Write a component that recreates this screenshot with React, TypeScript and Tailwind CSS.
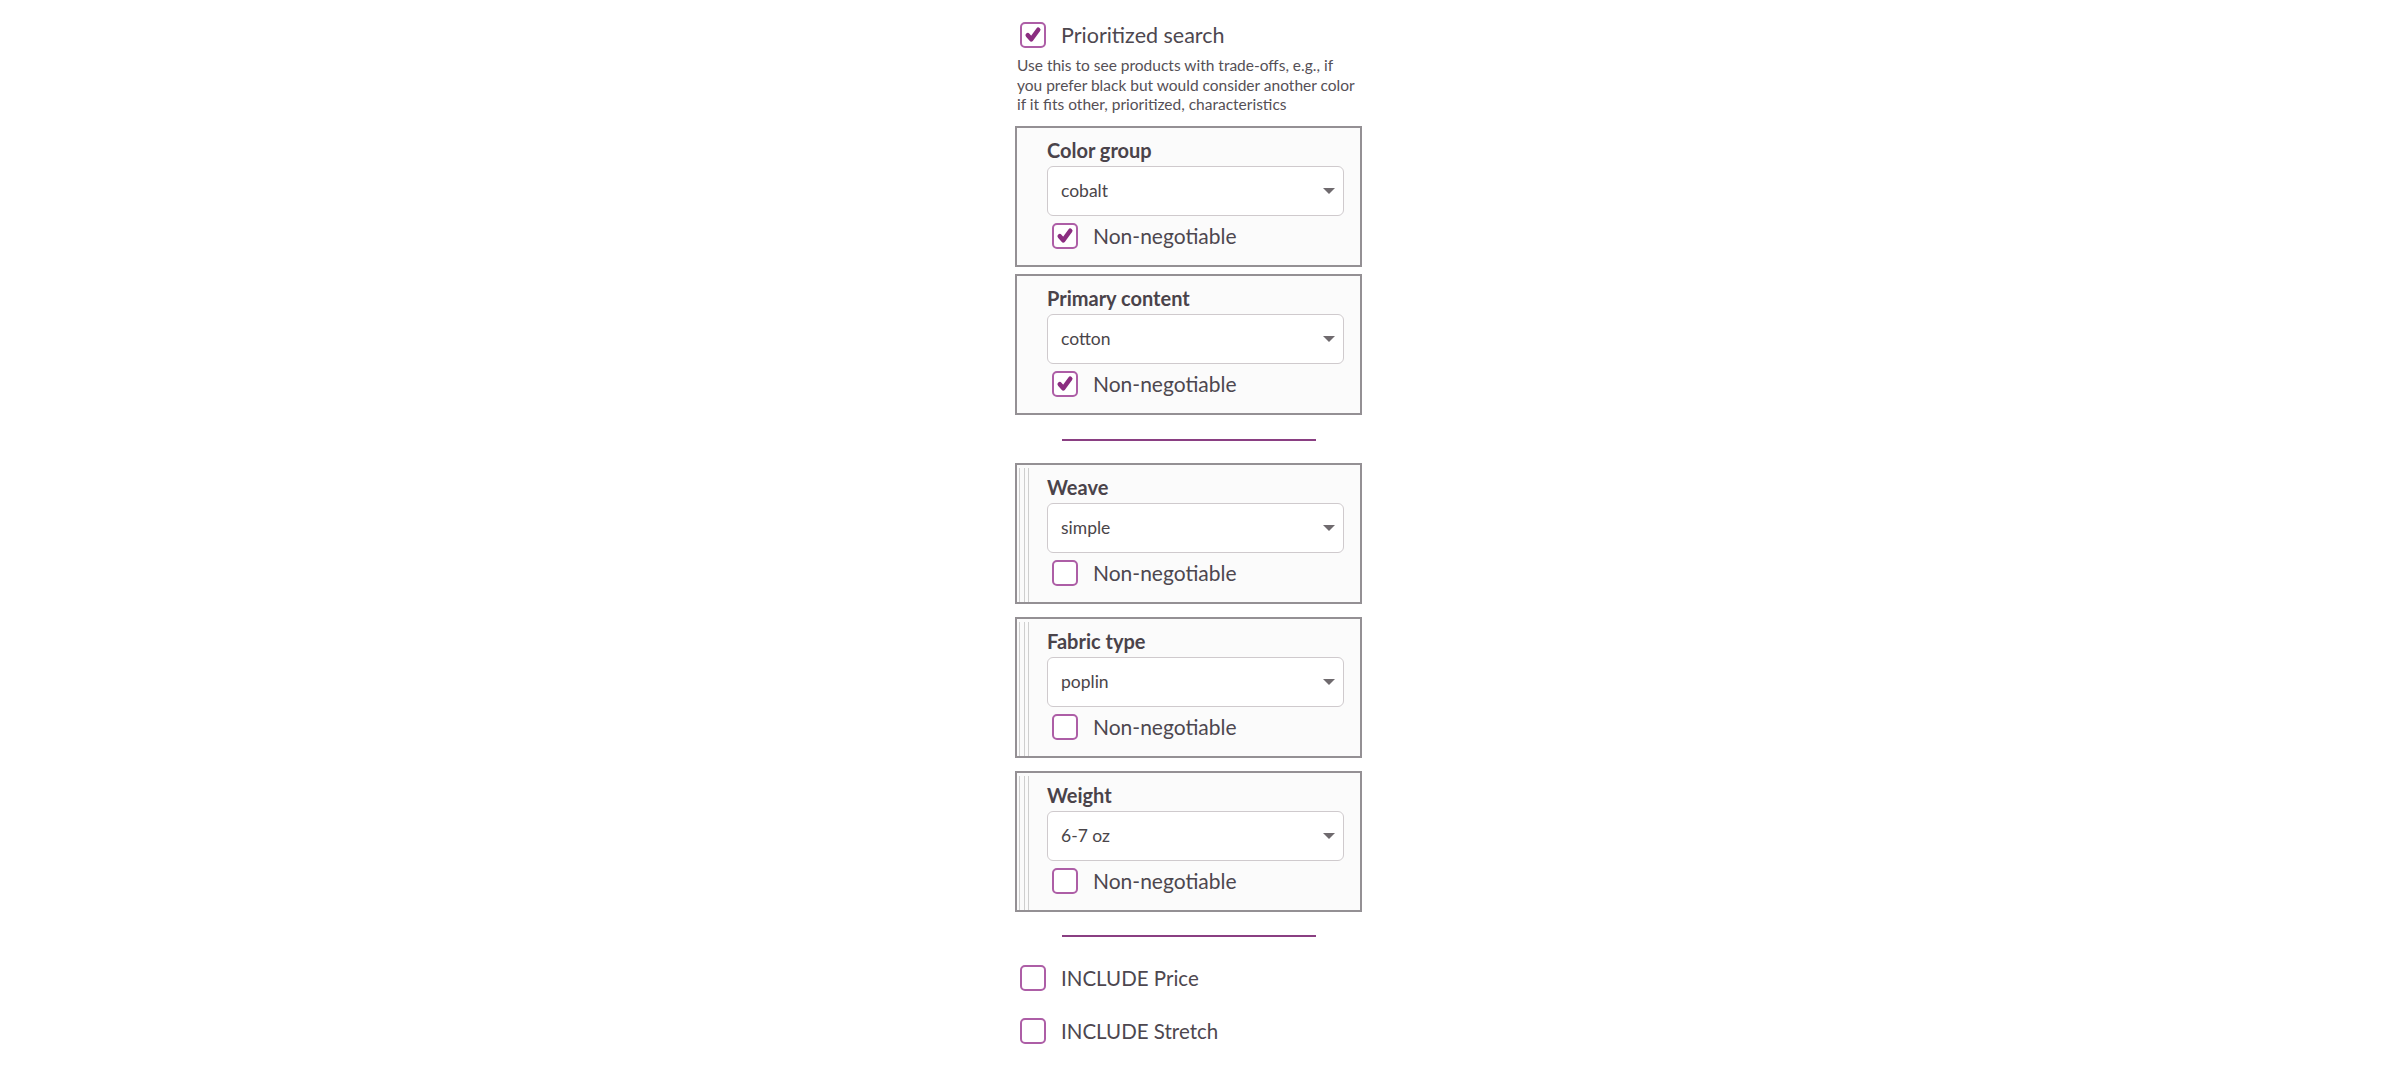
import { useState } from "react";

type Filter = {
  label: string;
  value: string;
  locked: boolean;
  grip: boolean;
};

const filters: Filter[] = [
  { label: "Color group", value: "cobalt", locked: true, grip: false },
  { label: "Primary content", value: "cotton", locked: true, grip: false },
  { label: "Weave", value: "simple", locked: false, grip: true },
  { label: "Fabric type", value: "poplin", locked: false, grip: true },
  { label: "Weight", value: "6-7 oz", locked: false, grip: true },
];

function Checkbox({ checked }: { checked: boolean }) {
  return (
    <span className="flex h-[26px] w-[26px] shrink-0 items-center justify-center rounded-[5px] border-2 border-[#ad5ea6] bg-white">
      {checked && (
        <svg viewBox="0 0 26 26" className="h-[26px] w-[26px]">
          <path
            d="M6.8 13.2 L11 18 L19.2 6.8"
            fill="none"
            stroke="#8b2d80"
            strokeWidth="5.4"
            strokeLinecap="round"
            strokeLinejoin="round"
          />
        </svg>
      )}
    </span>
  );
}

function Select({ value }: { value: string }) {
  return (
    <div className="flex h-[50px] items-center justify-between rounded-[6px] border-[1.5px] border-[#cfcacd] bg-white pl-[13px] pr-[8px] text-[17.5px] text-[#4a4549]">
      <span className="pt-[2px]">{value}</span>
      <svg viewBox="0 0 12 6" className="h-[6px] w-[12px]">
        <path d="M0 0 L12 0 L6 6 Z" fill="#6f6a6e" />
      </svg>
    </div>
  );
}

function FilterBox({ f }: { f: Filter }) {
  return (
    <div className="flex h-[141px] border-2 border-[#949094] bg-[#fbfbfb]">
      {f.grip ? (
        <div className="flex gap-[3.5px] pl-[2px] pt-[3px]">
          <span className="w-px bg-[#cfcfcf]" />
          <span className="w-px bg-[#cfcfcf]" />
          <span className="w-px bg-[#cfcfcf]" />
        </div>
      ) : (
        <div className="w-[12px]" />
      )}
      <div className="flex flex-1 flex-col pl-[18px] pr-[16px] pt-[11px]">
        <div className="text-[20px] font-bold leading-[23px] text-[#4a434a]">{f.label}</div>
        <div className="mt-[4px]">
          <Select value={f.value} />
        </div>
        <label className="mt-[7px] flex items-center gap-[15px] pl-[5px]">
          <Checkbox checked={f.locked} />
          <span className="text-[21px] leading-[26px] text-[#4d474f]">Non-negotiable</span>
        </label>
      </div>
    </div>
  );
}

export default function App() {
  const [extras] = useState(["INCLUDE Price", "INCLUDE Stretch"]);
  return (
    <div className="min-h-[1078px] bg-white font-['Lato',sans-serif]">
      <div className="ml-[1015px] flex w-[347px] flex-col pt-[22px]">
        <label className="flex items-center gap-[15px] pl-[5px]">
          <Checkbox checked />
          <span className="text-[21.5px] leading-[26px] text-[#4d474f]">Prioritized search</span>
        </label>
        <p className="mt-[8px] whitespace-nowrap pl-[2px] text-[15.5px] leading-[19.5px] text-[#555056]">
          Use this to see products with trade-offs, e.g., if
          <br />
          you prefer black but would consider another color
          <br />
          if it fits other, prioritized, characteristics
        </p>
        <div className="mt-[11px] flex flex-col gap-[7px]">
          <FilterBox f={filters[0]} />
          <FilterBox f={filters[1]} />
        </div>
        <div className="mx-auto mt-[24px] h-[2px] w-[254px] bg-[#8a3f82]" />
        <div className="mt-[22px] flex flex-col gap-[13px]">
          <FilterBox f={filters[2]} />
          <FilterBox f={filters[3]} />
          <FilterBox f={filters[4]} />
        </div>
        <div className="mx-auto mt-[23px] h-[2px] w-[254px] bg-[#8a3f82]" />
        <div className="mt-[28px] flex flex-col gap-[27px]">
          {extras.map((e) => (
            <label key={e} className="flex items-center gap-[15px] pl-[5px]">
              <Checkbox checked={false} />
              <span className="text-[20.5px] leading-[26px] text-[#4d474f]">{e}</span>
            </label>
          ))}
        </div>
      </div>
    </div>
  );
}
